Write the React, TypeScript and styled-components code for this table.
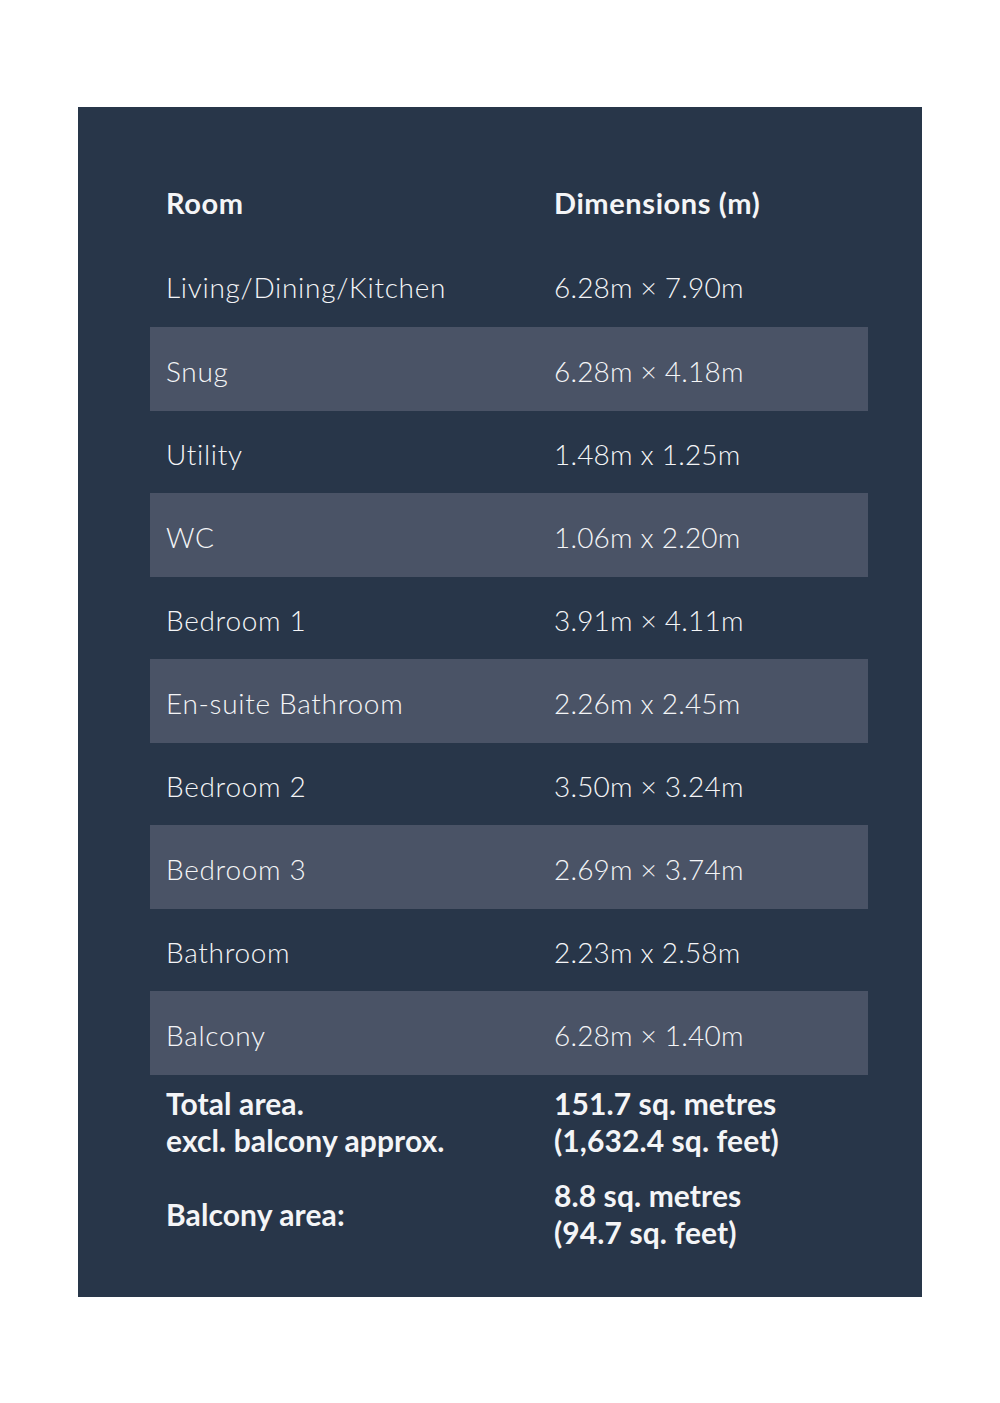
import React from 'react'
import styled, { createGlobalStyle } from 'styled-components'

const GlobalStyle = createGlobalStyle`
  html, body {
    margin: 0;
    padding: 0;
    background: #ffffff;
  }
  body {
    font-family: Lato, "Open Sans", sans-serif;
  }
`

const Page = styled.div`
  width: 1000px;
  min-height: 1403px;
  padding-top: 107px;
  box-sizing: border-box;
`

const Panel = styled.div`
  width: 844px;
  margin-left: 78px;
  box-sizing: border-box;
  padding: 54px 54px 46px 72px;
  background: #283649;
  color: #f4f5f7;
`

const Table = styled.div`
  display: flex;
  flex-direction: column;
`

const Row = styled.div<{ striped?: boolean; height?: number }>`
  display: grid;
  grid-template-columns: 388px 1fr;
  align-items: center;
  height: ${({ height }) => height ?? 83}px;
  padding-left: 16px;
  background: ${({ striped }) => (striped ? '#4a5366' : 'transparent')};
`

const HeadCell = styled.div`
  font-size: 29px;
  font-weight: 700;
  letter-spacing: 0.6px;
`

const Cell = styled.div<{ wide?: boolean }>`
  font-size: 28px;
  font-weight: 300;
  letter-spacing: ${({ wide }) => (wide ? 0.7 : 0.2)}px;
  padding-top: 3px;
`

const Summary = styled.div`
  display: flex;
  flex-direction: column;
  gap: 18px;
  padding-top: 10px;
`

const SummaryRow = styled.div`
  display: grid;
  grid-template-columns: 388px 1fr;
  align-items: center;
  padding-left: 16px;
`

const SummaryText = styled.div`
  font-size: 30px;
  font-weight: 700;
  line-height: 37px;
  letter-spacing: 0.1px;
`

const rooms: [string, string][] = [
  ['Living/Dining/Kitchen', '6.28m × 7.90m'],
  ['Snug', '6.28m × 4.18m'],
  ['Utility', '1.48m x 1.25m'],
  ['WC', '1.06m x 2.20m'],
  ['Bedroom 1', '3.91m × 4.11m'],
  ['En-suite Bathroom', '2.26m x 2.45m'],
  ['Bedroom 2', '3.50m × 3.24m'],
  ['Bedroom 3', '2.69m × 3.74m'],
  ['Bathroom', '2.23m x 2.58m'],
  ['Balcony', '6.28m × 1.40m'],
]

export default function App() {
  return (
    <Page>
      <GlobalStyle />
      <Panel>
        <Table>
          <Row>
            <HeadCell>Room</HeadCell>
            <HeadCell>Dimensions (m)</HeadCell>
          </Row>
          {rooms.map(([room, dims], i) => (
            <Row key={room} striped={i % 2 === 1} height={i === 0 ? 83 : i % 2 === 1 ? 84 : 82}>
              <Cell wide>{room}</Cell>
              <Cell>{dims}</Cell>
            </Row>
          ))}
        </Table>
        <Summary>
          <SummaryRow>
            <SummaryText>
              Total area.
              <br />
              excl. balcony approx.
            </SummaryText>
            <SummaryText>
              151.7 sq. metres
              <br />
              (1,632.4 sq. feet)
            </SummaryText>
          </SummaryRow>
          <SummaryRow>
            <SummaryText>Balcony area:</SummaryText>
            <SummaryText>
              8.8 sq. metres
              <br />
              (94.7 sq. feet)
            </SummaryText>
          </SummaryRow>
        </Summary>
      </Panel>
    </Page>
  )
}
